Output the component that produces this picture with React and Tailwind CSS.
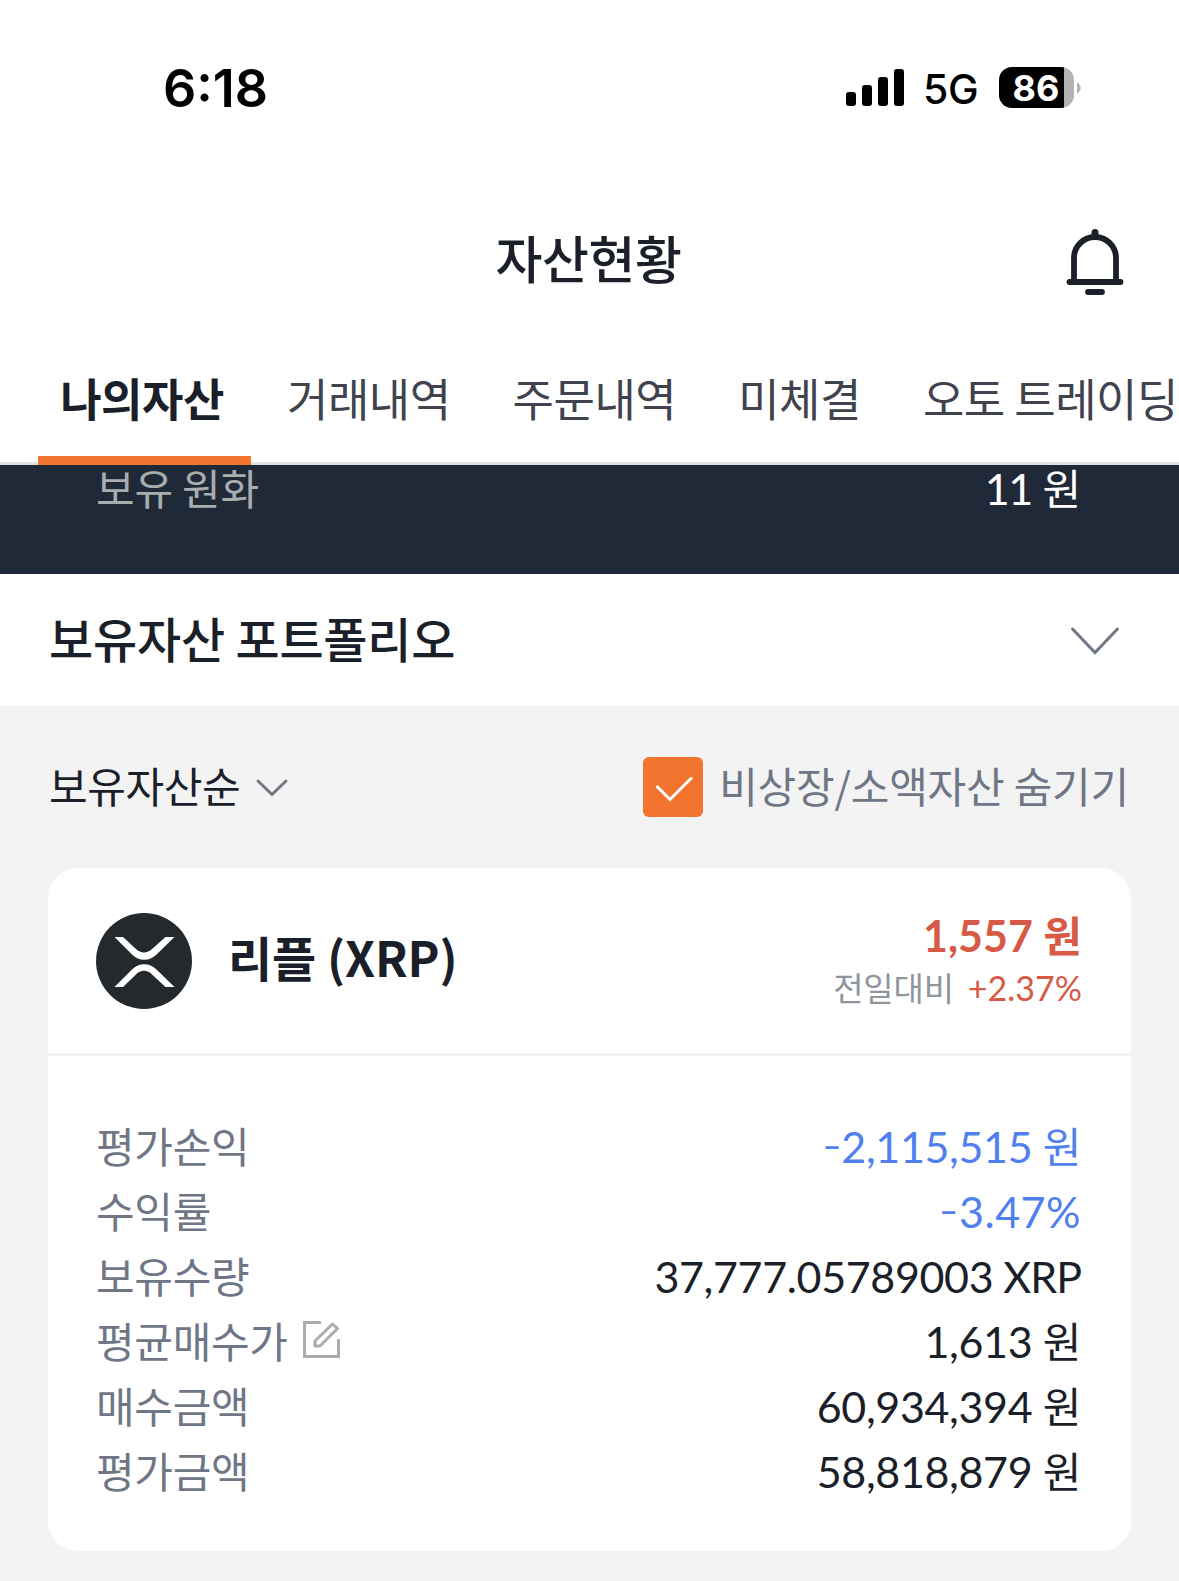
const rows = [
  { label: '평가손익', sign: '-', value: '2,115,515', unit: '원', color: 'text-[#4f80ee]' },
  { label: '수익률', sign: '-', value: '3.47%', color: 'text-[#4f80ee]', wide: true },
  { label: '보유수량', value: '37,777.05789003', symbol: 'XRP', color: 'text-[#1b1f29]' },
  { label: '평균매수가', value: '1,613', unit: '원', color: 'text-[#1b1f29]', editable: true },
  { label: '매수금액', value: '60,934,394', unit: '원', color: 'text-[#1b1f29]' },
  { label: '평가금액', value: '58,818,879', unit: '원', color: 'text-[#1b1f29]' },
];

const tabs = ['거래내역', '주문내역', '미체결', '오토 트레이딩'];

function StatusBar() {
  return (
    <div className="flex h-[175px] items-center justify-between pl-[163px] pr-[99px] font-['Inter',sans-serif] text-black">
      <span className="mt-[2px] text-[52px] font-semibold leading-none">6:18</span>
      <div className="flex items-center">
        <svg width="58" height="37" viewBox="0 0 58 37" className="mr-[20px]">
          <rect x="0" y="23" width="10" height="14" rx="3" />
          <rect x="16" y="16" width="10" height="21" rx="3" />
          <rect x="32" y="8" width="10" height="29" rx="3" />
          <rect x="48" y="0" width="10" height="37" rx="3" />
        </svg>
        <span className="mt-[4px] w-[75px] -translate-x-px text-[41px] font-medium leading-none tracking-[-0.3px]">5G</span>
        <div className="flex h-[41px] w-[75px] items-center justify-center overflow-hidden rounded-[13px] bg-linear-to-r from-black from-[65px] to-[#b3b3b3] to-[65px]">
          <span className="mr-px text-[36px] font-bold leading-none text-white">86</span>
        </div>
        <svg width="7" height="12" viewBox="0 0 7 12" className="-mr-px">
          <path d="M3 0.5C8 3 8 9 3 11.5Z" fill="#b3b3b3" />
        </svg>
      </div>
    </div>
  );
}

function BellIcon() {
  return (
    <svg width="58" height="68" viewBox="0 0 58 68" fill="none" stroke="#1b1f29" strokeWidth="5.8" strokeLinecap="round">
      <path d="M29 4.500V8" strokeWidth="7" />
      <path d="M8 53V30A21 21 0 0 1 50 30V53" />
      <path d="M3.500 54H54.500" />
      <path d="M22 64H36" />
    </svg>
  );
}

function EditIcon() {
  return (
    <svg width="37" height="37" viewBox="0 0 37 37" fill="none" stroke="#a9adad" strokeWidth="3" className="ml-[15px]">
      <path d="M18 1.500H1.500V35.500H35.500V18" />
      <path d="M29.500 3L34.500 7.500L17 25H12V20Z" strokeLinejoin="round" />
    </svg>
  );
}

function XrpLogo() {
  return (
    <svg width="96" height="96" viewBox="0 0 96 96">
      <circle cx="48" cy="48" r="48" fill="#23292c" />
      <path
        d="M18.500 24H27L40 36C44.500 40.500 51.500 40.500 56 36L69.500 24H78.500L60.500 41.500C53.500 48.500 43 48.500 36 41.500Z"
        fill="#fff"
      />
      <path
        d="M18.500 74H27L40 61.500C44.500 56.500 51.500 56.500 56 61.500L69.500 74H78.500L60.500 56.500C53.500 49.500 43 49.500 36 56.500Z"
        fill="#fff"
      />
    </svg>
  );
}

export default function App() {
  return (
    <div className="h-[1581px] w-[1179px] overflow-hidden bg-[#f3f3f3] font-['Noto_Sans_CJK_KR',sans-serif] text-[#1b1f29]">
      <header className="bg-white">
        <StatusBar />
        <div className="grid h-[163px] grid-cols-[1fr_auto_1fr] items-center pr-[55px]">
          <h1 className="col-start-2 mt-px ml-[53px] text-[51px] font-medium leading-[163px] tracking-[-0.4px]">자산현황</h1>
          <button className="mt-[10px] justify-self-end">
            <BellIcon />
          </button>
        </div>
        <nav className="flex h-[127px] gap-[62px] border-b-3 border-[#dfe1e5] pl-[38px] text-[45px] tracking-[-0.5px] whitespace-nowrap text-[#40434e]">
          <a className="-mr-[26px] h-[127px] w-[213px] shrink-0 border-b-9 border-[#f2742e] pr-[5px] text-center font-bold leading-[120px] text-[#1b1f29]">
            나의자산
          </a>
          {tabs.map((tab) => (
            <a key={tab} className="shrink-0 leading-[120px]">
              {tab}
            </a>
          ))}
        </nav>
      </header>

      <section className="flex h-[109px] items-baseline justify-between bg-[#1f2937] pl-[96px] pr-[98px] text-[42px] leading-[44px] tracking-[-0.2px]">
        <span className="text-[#a9adb0]">보유 원화</span>
        <span className="font-['Lato','Noto_Sans_CJK_KR',sans-serif] text-[43px] text-white">
          <span className="tracking-[-1.5px]">11</span> <span className="text-[42px]">원</span>
        </span>
      </section>

      <section className="flex h-[132px] items-center justify-between bg-white pl-[49px] pr-[58px]">
        <h2 className="mb-[6px] text-[48px] font-medium leading-[60px] tracking-[-0.2px]">보유자산 포트폴리오</h2>
        <svg width="52" height="30" viewBox="0 0 52 30" fill="none" stroke="#6f7685" strokeWidth="3" strokeLinecap="round" className="mt-[2px]">
          <path d="M3.500 3L26 26.500L48.500 3" />
        </svg>
      </section>

      <section className="flex h-[162px] items-center justify-between pl-[49px] pr-[50px] pb-[4px] text-[42px] leading-[60px] tracking-[-0.2px]">
        <button className="flex items-center tracking-[-0.4px]">
          보유자산순
          <svg width="34" height="20" viewBox="0 0 34 20" fill="none" stroke="#6f7685" strokeWidth="3" strokeLinecap="round" className="mt-[5px] ml-[15px]">
            <path d="M3 3L17 16.500L31 3" />
          </svg>
        </button>
        <label className="flex items-center text-[#6f7685]">
          <span className="mr-[16px] mt-[3px] flex h-[60px] w-[60px] rounded-[6px] bg-[#f2742e]">
            <svg width="60" height="60" viewBox="0 0 60 60" fill="none" stroke="#fff" strokeWidth="3">
              <path d="M13.500 29L27 42.500L49 20.500" />
            </svg>
          </span>
          비상장/소액자산 숨기기
        </label>
      </section>

      <article className="mx-[48px] h-[683px] rounded-[30px] bg-white">
        <div className="flex h-[188px] items-center border-b-3 border-[#f2f2f2] pl-[48px] pr-[49px]">
          <XrpLogo />
          <h3 className="ml-[36px] mb-[10px] text-[48px] font-bold leading-[60px] tracking-[-0.1px]">리플 (XRP)</h3>
          <div className="ml-auto text-right font-['Lato','Noto_Sans_CJK_KR',sans-serif] text-[#d65a45]">
            <p className="h-[53px] text-[43px] font-bold leading-[55px]">
              1,557 <span className="text-[42px]">원</span>
            </p>
            <p className="h-[53px] text-[34px] leading-[54px]">
              <span className="mr-[14px] text-[33px] tracking-[-0.2px] text-[#8f959d]">전일대비</span>
              +2.37%
            </p>
          </div>
        </div>
        <dl className="pt-[56px] pl-[48px] pr-[50px]">
          {rows.map((row) => (
            <div key={row.label} className="flex h-[65px] items-baseline justify-between leading-[65px]">
              <dt className="flex items-center text-[42px] tracking-[-0.3px] text-[#6f7685]">
                {row.label}
                {row.editable && <EditIcon />}
              </dt>
              <dd
                className={`font-['Lato','Noto_Sans_CJK_KR',sans-serif] text-[43px] ${
                  row.wide ? 'tracking-[0.5px]' : 'tracking-[-0.35px]'
                } ${row.color}`}
              >
                {row.sign && <span className="inline-block -translate-y-[2px] font-['Inter',sans-serif] font-light">{row.sign}</span>}
                {row.value}
                {row.symbol && <span className="tracking-[-1px]"> {row.symbol}</span>}
                {row.unit && <span className="text-[42px]"> {row.unit}</span>}
              </dd>
            </div>
          ))}
        </dl>
      </article>
    </div>
  );
}
